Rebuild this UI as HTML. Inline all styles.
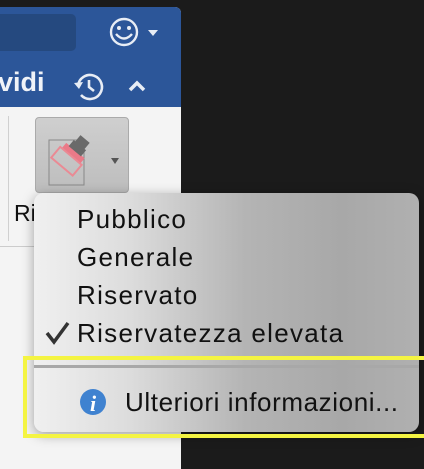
<html><head><style>
body{margin:0;width:424px;height:469px;background:#1b1b1b;position:relative;overflow:hidden;font-family:"Liberation Sans",sans-serif}
.abs{position:absolute}
</style></head><body>
<div class="abs" style="left:0;top:7px;width:181px;height:462px;background:#f4f4f4;border-top-right-radius:6px;overflow:hidden">
 <div class="abs" style="left:0;top:0;width:181px;height:100px;background:#2c5699"></div>
 <div class="abs" style="left:0;top:7px;width:76px;height:37px;background:#25497f;border-radius:0 5px 5px 0"></div>
 <svg class="abs" style="left:106px;top:9px" width="60" height="36"><circle cx="18" cy="16" r="13" fill="none" stroke="#e8edf5" stroke-width="2.4"/><circle cx="13" cy="12" r="2" fill="#e8edf5"/><circle cx="23" cy="12" r="2" fill="#e8edf5"/><path d="M10 18 Q18 27 26 18" fill="none" stroke="#e8edf5" stroke-width="2.4"/><path d="M42 14 L52 14 L47 20Z" fill="#e8edf5"/></svg>
 <div class="abs" style="left:-2px;top:60px;color:#f0f3f8;font-weight:bold;font-size:27px">vidi</div>
 <svg class="abs" style="left:70px;top:62px" width="90" height="40"><path d="M8 17 A12 12 0 1 1 11 26" fill="none" stroke="#e8edf5" stroke-width="2.6"/><path d="M4 14 L9 20 L13 13Z" fill="#e8edf5"/><path d="M19 11 V18 L24 22" fill="none" stroke="#e8edf5" stroke-width="2.6"/><path d="M60 21 L67 14 L74 21" fill="none" stroke="#e8edf5" stroke-width="3.5"/></svg>
 <div class="abs" style="left:8px;top:109px;width:1px;height:125px;background:#d0d0d0"></div>
 <div class="abs" style="left:0;top:239px;width:181px;height:1px;background:#ccc"></div>
 <div class="abs" style="left:35px;top:110px;width:92px;height:74px;background:linear-gradient(#cfcfcf,#bdbdbd);border:1px solid #aaa;border-radius:4px"></div>
 <svg class="abs" style="left:48px;top:118px" width="72" height="62"><rect x="1" y="15" width="35" height="45" fill="none" stroke="#888"/><g transform="rotate(40 25 30)"><rect x="12" y="25" width="24" height="7" fill="#ea7a88"/><rect x="10" y="32" width="28" height="14" fill="none" stroke="#ea8a94" stroke-width="2"/><rect x="18" y="10" width="12" height="15" fill="#6a6a6a"/><rect x="16" y="18" width="16" height="8" fill="#6a6a6a"/></g><path d="M63 33 L71 33 L67 39Z" fill="#555"/></svg>
 <div class="abs" style="left:14px;top:193px;font-size:23px;color:#111">Ri</div>
</div>
<div class="abs" style="left:34px;top:193px;width:385px;height:239px;border-radius:10px;background:linear-gradient(90deg,#f0f0f0 0%,#dcdcdc 25%,#b4b4b4 55%,#a8a8a8 80%,#b0b0b0 100%);box-shadow:0 3px 12px rgba(0,0,0,.35)"></div>
<div class="abs" style="left:23px;top:356px;width:410px;height:74px;border:4px solid #f4f442;border-right:none"></div>
<div class="abs" style="left:77px;top:200px;font-size:26px;letter-spacing:1.3px;color:#111;line-height:38px">Pubblico<br>Generale<br>Riservato<br>Riservatezza elevata</div>
<svg class="abs" style="left:44px;top:320px" width="30" height="26"><path d="M3 13 L10 22 L24 3" fill="none" stroke="#333" stroke-width="3.5"/></svg>
<div class="abs" style="left:34px;top:365px;width:385px;height:3px;background:#a8a8a8"></div>
<svg class="abs" style="left:77px;top:386px" width="32" height="32"><circle cx="16" cy="16" r="13" fill="#3f82d0"/><text x="16" y="25" font-family="Liberation Serif" font-style="italic" font-weight="bold" font-size="22" fill="#fff" text-anchor="middle">i</text></svg>
<div class="abs" style="left:125px;top:387px;font-size:26px;letter-spacing:0.6px;color:#111">Ulteriori informazioni...</div>
</body></html>
